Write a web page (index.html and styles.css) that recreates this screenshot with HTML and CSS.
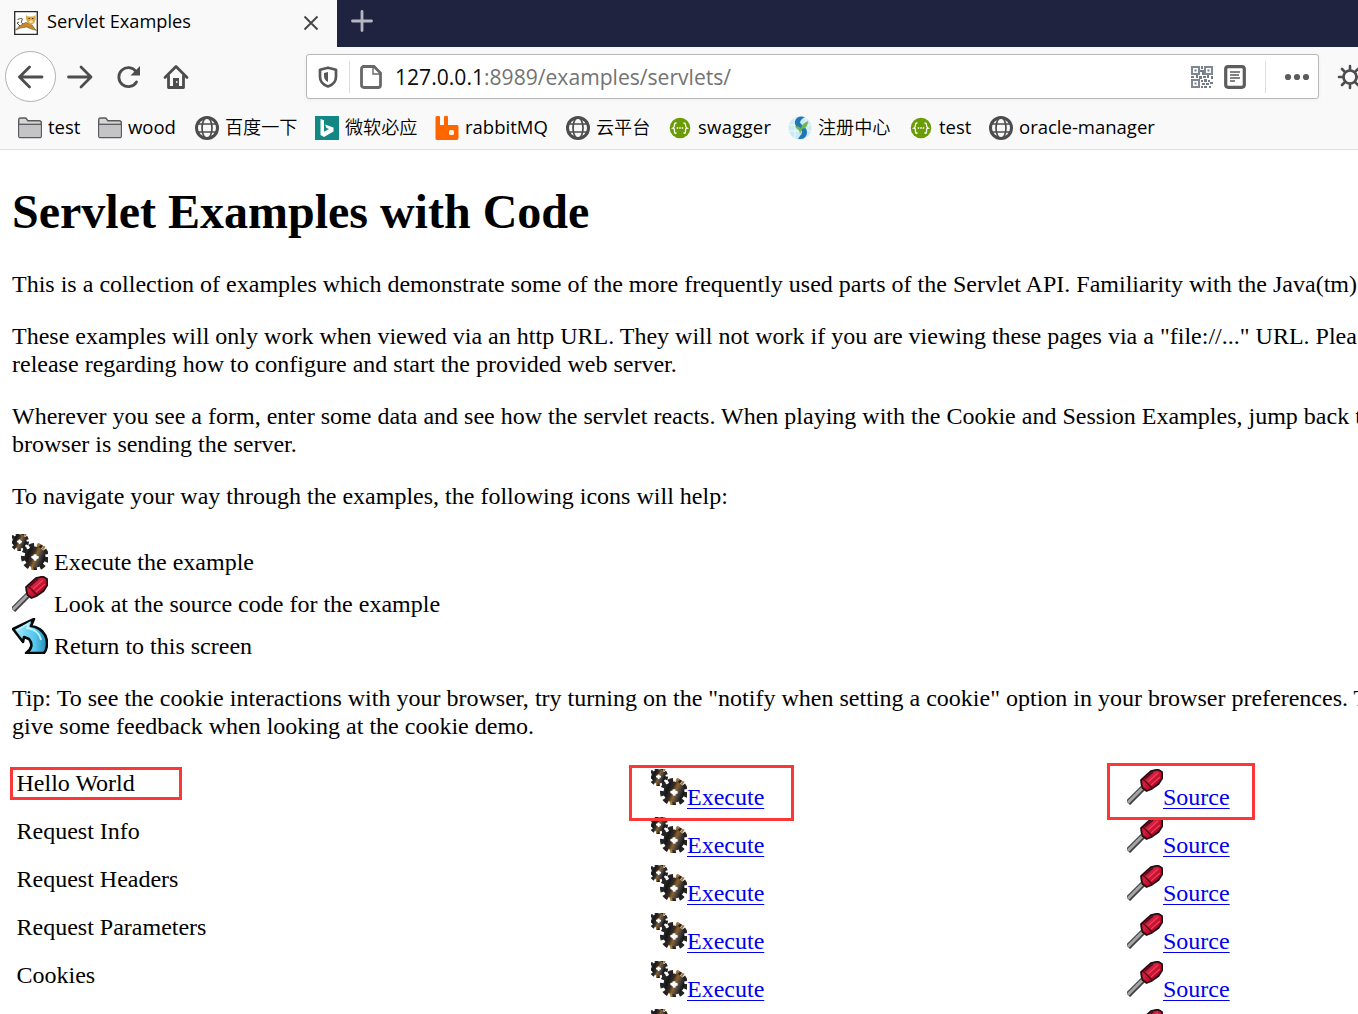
FILE: index.html
```html
<!DOCTYPE html>
<html lang="zh-CN">
<head>
<meta charset="utf-8">
<title>Servlet Examples</title>
<link rel="stylesheet" href="styles.css">
</head>
<body>
<svg class="sprite" aria-hidden="true">
  <defs>
    <linearGradient id="metal" x1="0" y1="0" x2="1" y2="0.4"><stop offset="0" stop-color="#2c3440"/><stop offset=".3" stop-color="#17171a"/><stop offset=".5" stop-color="#3a2d20"/><stop offset=".64" stop-color="#8a6431"/><stop offset=".8" stop-color="#4c463f"/><stop offset="1" stop-color="#17191d"/></linearGradient>
    <linearGradient id="ice" x1="0" y1="0" x2="1" y2="0"><stop offset="0" stop-color="#a9ecff"/><stop offset=".65" stop-color="#55c5ed"/><stop offset="1" stop-color="#2289b0"/></linearGradient>
    <linearGradient id="red" x1="0" y1="0" x2="1" y2="1"><stop offset="0" stop-color="#850a20"/><stop offset=".4" stop-color="#d81f3d"/><stop offset=".65" stop-color="#b80b2c"/><stop offset="1" stop-color="#650719"/></linearGradient>
  </defs>
  <symbol id="gear" viewBox="-13 -13 26 26">
    <circle r="11" fill="none" stroke="#25221f" stroke-width="4" stroke-dasharray="4.600 3.080"/>
    <circle r="9.800" fill="url(#metal)"/>
    <path d="M2-10l3-2M7-7l2-3M-3 9l1 3" stroke="#a87530" stroke-width="2"/>
    <path d="M-1.200-2.600h2.400l.3 1.400L3.400-.8v2.200l-1.700.4-.6 1.600h-1.700L-1.600 1.800-3.400 1V-1l2-.3z" fill="#fff"/>
  </symbol>
  <symbol id="gears" viewBox="0 0 36 36">
    <use href="#gear" x="-2" y="-2" width="19" height="19"/>
    <use href="#gear" x="9" y="9" width="28" height="28"/>
  </symbol>
  <symbol id="driver" viewBox="0 0 36 36">
    <path d="M1 34L17 18" stroke="#444" stroke-width="6"/>
    <path d="M1 33.500L17 17.500" stroke="#a5a5a5" stroke-width="3"/>
    <path d="M14.500 15l-.5-4 4-3.500L24 2l7-1.500 4 2.500.5 6-4 6-7 5-5 2-4-3z" fill="url(#red)" stroke="#241014" stroke-width="1.800"/>
    <path d="M16 10l9 9M18 10l8-7" stroke="#560817" stroke-width="1.400"/><path d="M21 13L31 4M24 16l9-8" stroke="#ee405a" stroke-width="1.200"/>
  </symbol>
  <symbol id="return" viewBox="0 0 36 36">
    <path d="M1 11L22 1l-3 7c9 1 16 8 16 17 0 5-1 8-3 10H14c6-4 7-9 3-14l-5-2-1 5z" fill="url(#ice)" stroke="#05090b" stroke-width="2.600" stroke-linejoin="round"/>
    <path d="M5 12L17 5l-2 5c8 1 13 6 14 12" fill="none" stroke="#baf3ff" stroke-width="1.800"/>
  </symbol>
  <symbol id="globe" viewBox="0 0 24 24"><g fill="none" stroke="#4d4d4f"><circle cx="12" cy="12" r="10.500" stroke-width="3"/><ellipse cx="12" cy="12" rx="5" ry="10.500" stroke-width="1.700"/><path d="M2 8h20M2 16h20" stroke-width="1.300"/></g></symbol>
  <symbol id="folder" viewBox="0 0 24 24"><path d="M.7 4Q.7 2 2.700 2h4.500q1.300 0 2 2l.6.800H21q2.300 0 2.300 2V20q0 1.600-2 1.600H2.700Q.7 21.600.7 20z" fill="#d6d6d8" stroke="#59595b" stroke-width="1.400"/><path d="M1.500 9h21v12h-21z" fill="#c4c4c7"/><path d="M1 8.300h22" fill="none" stroke="#59595b" stroke-width="1.300"/></symbol>
  <symbol id="swagger" viewBox="0 0 24 24"><circle cx="12" cy="12" r="10.300" fill="#6a9c05"/><path d="M8.500 7H8Q6.500 7 6.500 9T5 12q1.500 0 1.500 3T8 17h.5M15.500 7h.5q1.500 0 1.500 2T19 12q-1.500 0-1.500 3T16 17h-.5" fill="none" stroke="#fff" stroke-width="1.300"/><path d="M8.700 12h1.500m1 0h1.500m1 0h1.500" stroke="#fff" stroke-width="1.500"/></symbol>
</svg>

<header class="browser">
  <div class="tabs">
    <div class="tab">
      <svg class="i24" viewBox="0 0 24 24"><path d="M.7.700h22.600v22.600H.7z" fill="#fff" stroke="#292929" stroke-width="1.300"/><path d="M1.500 19l4-4 6-3.500 4 1 3 2 2 3 2 2-5-1.500-5-2-6 1z" fill="#c58a2c" stroke="#70501e" stroke-width=".6"/><path d="M12 4l2 1.500h5L21.500 4l.3 4-1.500 4-3 2-3.500-2-1.800-4z" fill="#dca83f"/><path d="M15 10l2-1 2 1-.5 2h-3z" fill="#f4dfa0"/><path d="M9 13Q6 12 8 9T3.500 8.500M5 11l-2 1 3 3" stroke="#56534d" fill="none"/><path d="M14.500 7.500h1.300M18 7.500h1.300" stroke="#3e2b10"/></svg>
      <span class="tab-title">Servlet Examples</span>
      <svg class="close" viewBox="0 0 16 16"><path d="M1.500 1.500l13 13m0-13l-13 13" stroke="#464648" stroke-width="1.900"/></svg>
    </div>
    <svg class="plus" viewBox="0 0 22 22"><path d="M11 1.500v19M1.500 11h19" stroke="#b7b7c1" stroke-width="2.800" stroke-linecap="round"/></svg>
  </div>
  <div class="nav">
    <div class="back"><svg class="i26" viewBox="0 0 26 26"><path d="M24 13H1.500M11.500 3l-10 10 10 10" class="line"/></svg></div>
    <svg class="i26 forward" viewBox="0 0 26 26"><path d="M1.500 13h22M14 3l10 10-10 10" class="line"/></svg>
    <svg class="i26 reload" viewBox="0 0 26 26"><path d="M21.500 18a9.500 9.500 0 1 1-.5-10.500" class="line"/><path d="M25 2v9.500h-9.500z" fill="#4d4d4f"/></svg>
    <svg class="i26 home" viewBox="0 0 26 26"><path d="M2 13.500L13 2.500l11 11" class="line"/><path d="M5.500 12v11.500h15V12" class="line"/><path d="M10 23v-9h6v9z" fill="#4d4d4f"/><path d="M13 18h1.500" stroke="#fff" stroke-width="1.500"/></svg>
    <div class="url">
      <svg class="shield" viewBox="0 0 20 22"><path d="M10 1.700l8 2v7q0 7-8 9.800-8-2.800-8-9.800v-7z" fill="none" stroke="#58585a" stroke-width="2.700" stroke-linejoin="round"/><path d="M10 6v10q-4-2-4-6V7z" fill="#58585a"/></svg>
      <span class="sep"></span>
      <svg class="doc" viewBox="0 0 22 24"><path d="M4 1.500h10l6.500 6.500v12q0 2.500-2.500 2.500H4Q1.500 22.500 1.500 20V4Q1.500 1.500 4 1.500z" fill="none" stroke="#68686a" stroke-width="2.800"/><path d="M13 1v8h8" fill="none" stroke="#68686a" stroke-width="1.400"/></svg>
      <span class="address"><b>127.0.0.1</b>:8989/examples/servlets/</span>
      <svg class="qr" viewBox="0 0 22 22"><g fill="none" stroke="#808794" stroke-width="2"><path d="M1 1h7v7H1zM14 1h7v7h-7zM1 14h7v7H1z"/></g><path d="M3.500 3.500h2v2h-2zM16.500 3.500h2v2h-2zM3.500 16.500h2v2h-2zM10 0h2v3h-2zM9 4h4v2H9zM11 6h2v3h-2zM0 10h3v2H0zM5 9h2v3H5zM8 10h3v3H8zM12 10h3v2h-3zM16 9h2v3h-2zM20 10h2v3h-2zM10 14h2v2h-2zM13 13h3v3h-3zM17 14h2v2h-2zM19 16h3v2h-3zM15 17h3v2h-3zM11 17h3v2h-3zM10 20h2v2h-2zM13 20h3v2h-3zM18 20h2v2h-2z" fill="#737b89"/></svg>
      <svg class="reader" viewBox="0 0 22 24"><rect x="1.700" y="1.700" width="18.600" height="20.600" rx="2.500" fill="none" stroke="#5c5c5e" stroke-width="3.200"/><path d="M6 7h10M6 10h9M6 13h10M6 16h5" stroke="#5c5c5e" stroke-width="1.400"/></svg>
      <span class="sep far"></span>
      <svg class="dots" viewBox="0 0 26 8"><path d="M4 4h.01M13 4h.01M22 4h.01" stroke="#5c5c5e" stroke-width="6.200" stroke-linecap="round"/></svg>
    </div>
    <svg class="cog" viewBox="0 0 26 26"><circle cx="13" cy="13" r="6.500" fill="none" stroke="#4d4d4f" stroke-width="2.700"/><path d="M13 2v4M13 20v4M2 13h4M20 13h4M5 5l3 3M18 18l3 3M5 21l3-3M18 8l3-3" stroke="#4d4d4f" stroke-width="2.600" stroke-linecap="round"/></svg>
  </div>
  <div class="bookmarks">
    <div class="mark"><svg class="i24"><use href="#folder"/></svg><span>test</span></div>
    <div class="mark"><svg class="i24"><use href="#folder"/></svg><span>wood</span></div>
    <div class="mark cjk"><svg class="i24"><use href="#globe"/></svg><span>百度一下</span></div>
    <div class="mark cjk"><svg class="i24" viewBox="0 0 24 24"><path d="M0 0h24v24H0z" fill="#128784"/><path d="M5.500 3l3.500 1.300v11.500l5-2.700-2.500-1-1.500-3.500 8.500 3v4L9 21l-3.500-2z" fill="#fff"/></svg><span>微软必应</span></div>
    <div class="mark"><svg class="i24" viewBox="0 0 24 24"><path fill="#f60" d="M2 0h2q1 0 1 1v8h4V1q0-1 1-1h2q1 0 1 1v8h9q1.500 0 1.500 1.500V22q0 2-2 2H2q-1.500 0-1.500-1.500V1.500Q.5 0 2 0z"/><rect x="14" y="14" width="5" height="5" rx="1.500" fill="#fff1e8"/></svg><span>rabbitMQ</span></div>
    <div class="mark cjk"><svg class="i24"><use href="#globe"/></svg><span>云平台</span></div>
    <div class="mark"><svg class="i24"><use href="#swagger"/></svg><span class="wide">swagger</span></div>
    <div class="mark cjk"><svg class="i24" viewBox="0 0 24 24"><circle cx="12" cy="12" r="11.500" fill="#cbebf4"/><path d="M1 9h22M1 15h22M7 2v20M18 2v20" stroke="#eefaff"/><path d="M17 1Q9-1 7 5q-1 5 5 8 4 3 0 7l-2 3q9 1 9-7 0-4-6-8-3-3 4-7z" fill="#2176b5"/><path d="M20 5q0 7-6 8l-2 5q0-4-4-6l-1-2q5 0 6 3 0-5 7-8z" fill="#70b64b"/></svg><span>注册中心</span></div>
    <div class="mark"><svg class="i24"><use href="#swagger"/></svg><span>test</span></div>
    <div class="mark"><svg class="i24"><use href="#globe"/></svg><span>oracle-manager</span></div>
  </div>
</header>

<main class="page">
  <h1>Servlet Examples with Code</h1>
  <p>This is a collection of examples which demonstrate some of the more frequently used parts of the Servlet API. Familiarity with the Java(tm)</p>
  <p>These examples will only work when viewed via an http URL. They will not work if you are viewing these pages via a "file://..." URL. Plea<br>release regarding how to configure and start the provided web server.</p>
  <p>Wherever you see a form, enter some data and see how the servlet reacts. When playing with the Cookie and Session Examples, jump back t<br>browser is sending the server.</p>
  <p>To navigate your way through the examples, the following icons will help:</p>
  <p><svg class="pic"><use href="#gears"/></svg> Execute the example<br><svg class="pic"><use href="#driver"/></svg> Look at the source code for the example<br><svg class="pic"><use href="#return"/></svg> Return to this screen</p>
  <p>Tip: To see the cookie interactions with your browser, try turning on the "notify when setting a cookie" option in your browser preferences. T<br>give some feedback when looking at the cookie demo.</p>
  <div class="examples">
    <div class="row"><span class="name">Hello World</span><span><svg class="pic"><use href="#gears"/></svg><a href="#">Execute</a></span><span><svg class="pic"><use href="#driver"/></svg><a href="#">Source</a></span></div>
    <div class="row"><span class="name">Request Info</span><span><svg class="pic"><use href="#gears"/></svg><a href="#">Execute</a></span><span><svg class="pic"><use href="#driver"/></svg><a href="#">Source</a></span></div>
    <div class="row"><span class="name">Request Headers</span><span><svg class="pic"><use href="#gears"/></svg><a href="#">Execute</a></span><span><svg class="pic"><use href="#driver"/></svg><a href="#">Source</a></span></div>
    <div class="row"><span class="name">Request Parameters</span><span><svg class="pic"><use href="#gears"/></svg><a href="#">Execute</a></span><span><svg class="pic"><use href="#driver"/></svg><a href="#">Source</a></span></div>
    <div class="row"><span class="name">Cookies</span><span><svg class="pic"><use href="#gears"/></svg><a href="#">Execute</a></span><span><svg class="pic"><use href="#driver"/></svg><a href="#">Source</a></span></div>
    <div class="row"><span></span><span><svg class="pic"><use href="#gears"/></svg></span><span><svg class="pic"><use href="#driver"/></svg></span></div>
    <i class="hl hl-name"></i><i class="hl hl-exec"></i><i class="hl hl-source"></i>
  </div>
</main>
</body>
</html>
```
FILE: styles.css
```css
* { box-sizing: border-box; }
body { margin: 0; width: 1358px; height: 1014px; overflow: hidden; background: #fff; color: #000; }
svg { display: block; flex: none; }
.sprite { position: absolute; width: 0; height: 0; }
.i24 { width: 24px; height: 24px; }
.i26 { width: 26px; height: 26px; }
.line { fill: none; stroke: #4d4d4f; stroke-width: 2.8; stroke-linecap: round; stroke-linejoin: round; }

.browser { height: 150px; background: #f9f9fa; border-bottom: 1px solid #dededf; font-family: "Open Sans", "Noto Sans CJK SC", sans-serif; overflow: hidden; }
.tabs { display: flex; height: 47px; background: #202340; }
.tab { display: flex; align-items: center; width: 337px; padding: 0 18px 1px 14px; background: #f9f9fa; }
.tab-title { margin-left: 9px; flex: 1; font-size: 18.2px; line-height: 26px; padding-bottom: 5px; }
.close { width: 16px; height: 16px; }
.plus { width: 22px; height: 22px; margin: 10px 0 0 14px; }

.nav { display: flex; align-items: center; height: 59px; padding-left: 5px; }
.back { display: flex; align-items: center; justify-content: center; flex: none; width: 51px; height: 51px; border: 1px solid #b1b1b3; border-radius: 50%; background: #fff; }
.forward { margin-left: 11px; }
.reload { margin-left: 22px; }
.home { margin-left: 22px; }
.url { display: flex; align-items: center; flex: none; width: 1013px; height: 45px; margin-left: 117px; padding-left: 11px; background: #fff; border: 1px solid #b8b8bc; border-radius: 3px; box-shadow: 0 1px 4px #0000000d; }
.shield { width: 20px; height: 22px; }
.sep { width: 1px; height: 32px; background: #dededf; margin-left: 11px; }
.doc { width: 22px; height: 24px; margin-left: 10px; }
.address { width: 808px; margin-left: 13px; font-size: 21.1px; line-height: 30px; color: #737373; white-space: nowrap; }
.address b { font-weight: 400; color: #0c0c0d; }
.qr { width: 22px; height: 22px; margin-left: -12px; }
.reader { width: 22px; height: 24px; margin-left: 11px; }
.far { margin-left: 19px; }
.dots { width: 26px; height: 8px; margin-left: 18px; }
.cog { width: 26px; height: 26px; margin-left: 18px; }

.bookmarks { display: grid; grid-template-columns: 80px 97px 120px 120px 131px 102px 120px 121px 80px auto; height: 43px; padding-left: 18px; align-items: center; }
.mark { display: flex; align-items: center; gap: 6px; font-size: 18.5px; line-height: 24px; white-space: nowrap; }
.mark span { padding-bottom: 2px; }
.mark.cjk { font-size: 18.1px; font-weight: 350; }
.wide { letter-spacing: .25px; }

.page { display: flow-root; width: 1358px; height: 864px; padding-left: 12px; overflow: hidden; font-family: "Liberation Serif", serif; font-size: 24px; line-height: 28px; white-space: nowrap; }
h1 { margin: 34px 0 30px; font-size: 48px; line-height: 56px; }
p { margin: 0 0 24px; word-spacing: .03px; }
.pic { display: inline-block; width: 36px; height: 36px; vertical-align: baseline; }
.examples { position: relative; padding: 5px 0 0 4px; }
.row { display: grid; grid-template-columns: 635px 476px auto; height: 48px; }
.name { padding-left: .5px; }
a { color: #0000ee; text-decoration: underline; text-decoration-thickness: 1px; text-underline-offset: 3px; }
.hl { position: absolute; border: 3px solid #fb3737; }
.hl-name { left: -2px; top: 3px; width: 172px; height: 33px; }
.hl-exec { left: 617px; top: 1px; width: 165px; height: 56px; }
.hl-source { left: 1095px; top: -1px; width: 148px; height: 57px; }
```
